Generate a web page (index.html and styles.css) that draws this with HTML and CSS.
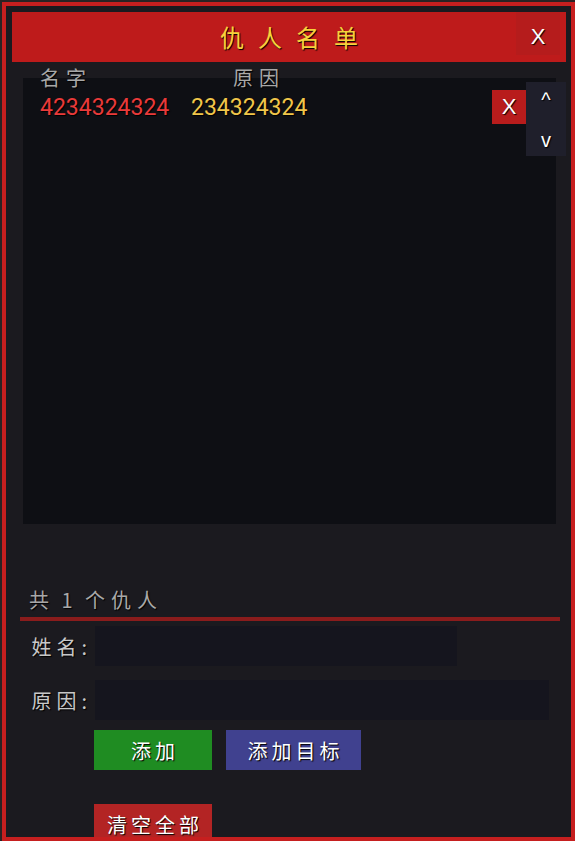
FILE: index.html
```html
<!DOCTYPE html>
<html lang="zh">
<head>
    <meta charset="UTF-8">
    <meta name="viewport" content="width=device-width, initial-scale=1.0">
    <title>仇人名单</title>
    <link rel="stylesheet" href="styles.css">
</head>
<body>
    <div class="panel">
        <div class="header">
            <span></span>
            <h1>仇人名单</h1>
            <button class="close">X</button>
        </div>

        <div class="cols">
            <span class="col-name">名字</span>
            <span>原因</span>
        </div>

        <div class="list">
            <div class="row">
                <span class="name">4234324324</span>
                <span class="reason">234324324</span>
                <button class="del">X</button>
            </div>
            <div class="scroll">
                <span class="up">^</span>
                <span class="down">v</span>
            </div>
        </div>

        <div class="count">共 1 个仇人</div>
        <div class="divider"></div>

        <div class="field">
            <label for="name">姓名:</label>
            <input type="text" id="name" class="short">
        </div>
        <div class="field second">
            <label for="reason">原因:</label>
            <input type="text" id="reason" class="long">
        </div>

        <div class="actions">
            <button class="btn add">添加</button>
            <button class="btn target">添加目标</button>
        </div>
        <button class="btn clear">清空全部</button>
    </div>
</body>
</html>
```

FILE: styles.css
```css
body {
    margin: 0;
    height: 841px;
    overflow: hidden;
    background-color: #2a2324;
    font-family: "Noto Sans CJK SC", sans-serif;
}
button, input {
    font-family: inherit;
}
.panel {
    margin: 2px 0 0 2px;
    height: 839px;
    box-sizing: border-box;
    border: 4px solid #c61f1f;
    background-color: #1b1a1f;
    padding: 6px 5px 0 6px;
    overflow: hidden;
}
.header {
    display: grid;
    grid-template-columns: 50px 1fr 50px;
    height: 50px;
    background-color: #be1b1b;
}
.header h1 {
    margin: 0;
    text-align: center;
    font-size: 24px;
    font-weight: normal;
    line-height: 50px;
    letter-spacing: 14px;
    padding-left: 14px;
    color: #f6d23c;
    text-shadow: 1px 1px 1px #000;
}
.close {
    width: 44px;
    height: 43px;
    border: none;
    background-color: #b51c1c;
    color: #fff;
    font-family: "Liberation Sans", Arial, sans-serif;
    font-size: 22px;
    padding: 7px 0 0 0;
    text-shadow: 1px 1px 1px #000;
    cursor: pointer;
}
.cols {
    position: relative;
    z-index: 1;
    display: flex;
    height: 12px;
    margin-top: 4px;
    padding-left: 28px;
    font-size: 20px;
    line-height: 24px;
    letter-spacing: 6px;
    color: #a8a8a8;
    text-shadow: 1px 1px 1px #000;
}
.col-name {
    width: 193px;
}
.list {
    position: relative;
    height: 446px;
    margin: 0 10px 0 11px;
    padding: 12px 30px 0 17px;
    box-sizing: border-box;
    background-color: #0e0f14;
}
.row {
    display: flex;
    align-items: center;
    height: 34px;
    font-family: Roboto, "Liberation Sans", sans-serif;
    font-size: 23px;
    text-shadow: 1px 1px 1px #000;
}
.name {
    width: 151px;
    color: #e93a3a;
}
.reason {
    flex: 1;
    color: #f0c64a;
}
.del {
    width: 34px;
    height: 34px;
    border: none;
    background-color: #b81c1c;
    color: #fff;
    font-family: "Liberation Sans", Arial, sans-serif;
    font-size: 22px;
    padding: 0;
    text-shadow: 1px 1px 1px #000;
}
.scroll {
    position: absolute;
    top: 4px;
    right: -10px;
    width: 40px;
    height: 74px;
    display: flex;
    flex-direction: column;
    background-color: #1f1f2b;
    color: #fff;
    font-family: "Liberation Sans", Arial, sans-serif;
    font-size: 20px;
    text-align: center;
    text-shadow: 1px 1px 1px #000;
}
.scroll span {
    height: 37px;
    line-height: 37px;
}
.scroll .down {
    padding-top: 3px;
}
.count {
    margin-top: 62px;
    padding-left: 17px;
    font-size: 20px;
    line-height: 28px;
    letter-spacing: 6px;
    word-spacing: -4px;
    color: #a8a8a8;
    text-shadow: 1px 1px 1px #000;
}
.divider {
    height: 4px;
    margin: 3px 6px 0 8px;
    background-color: #8a1c1c;
}
.field {
    display: flex;
    align-items: center;
    height: 40px;
    margin-top: 5px;
}
.field.second {
    margin-top: 14px;
}
.field label {
    width: 83px;
    box-sizing: border-box;
    padding-right: 3px;
    text-align: right;
    font-size: 20px;
    letter-spacing: 5px;
    color: #c8c8c8;
    text-shadow: 1px 1px 1px #000;
}
.field input {
    height: 40px;
    box-sizing: border-box;
    border: none;
    background-color: #15151e;
    color: #fff;
    font-size: 18px;
    outline: none;
}
.short {
    width: 362px;
}
.long {
    width: 454px;
}
.actions {
    display: flex;
    gap: 14px;
    margin-top: 10px;
    padding-left: 82px;
}
.btn {
    height: 40px;
    border: none;
    color: #fff;
    font-size: 20px;
    letter-spacing: 4px;
    padding: 0 0 0 4px;
    text-shadow: 1px 1px 1px #000;
    cursor: pointer;
}
.add {
    width: 118px;
    background-color: #1f8c22;
}
.target {
    width: 135px;
    background-color: #40418f;
}
.clear {
    display: block;
    width: 118px;
    margin: 34px 0 0 82px;
    background-color: #b32424;
}
```
